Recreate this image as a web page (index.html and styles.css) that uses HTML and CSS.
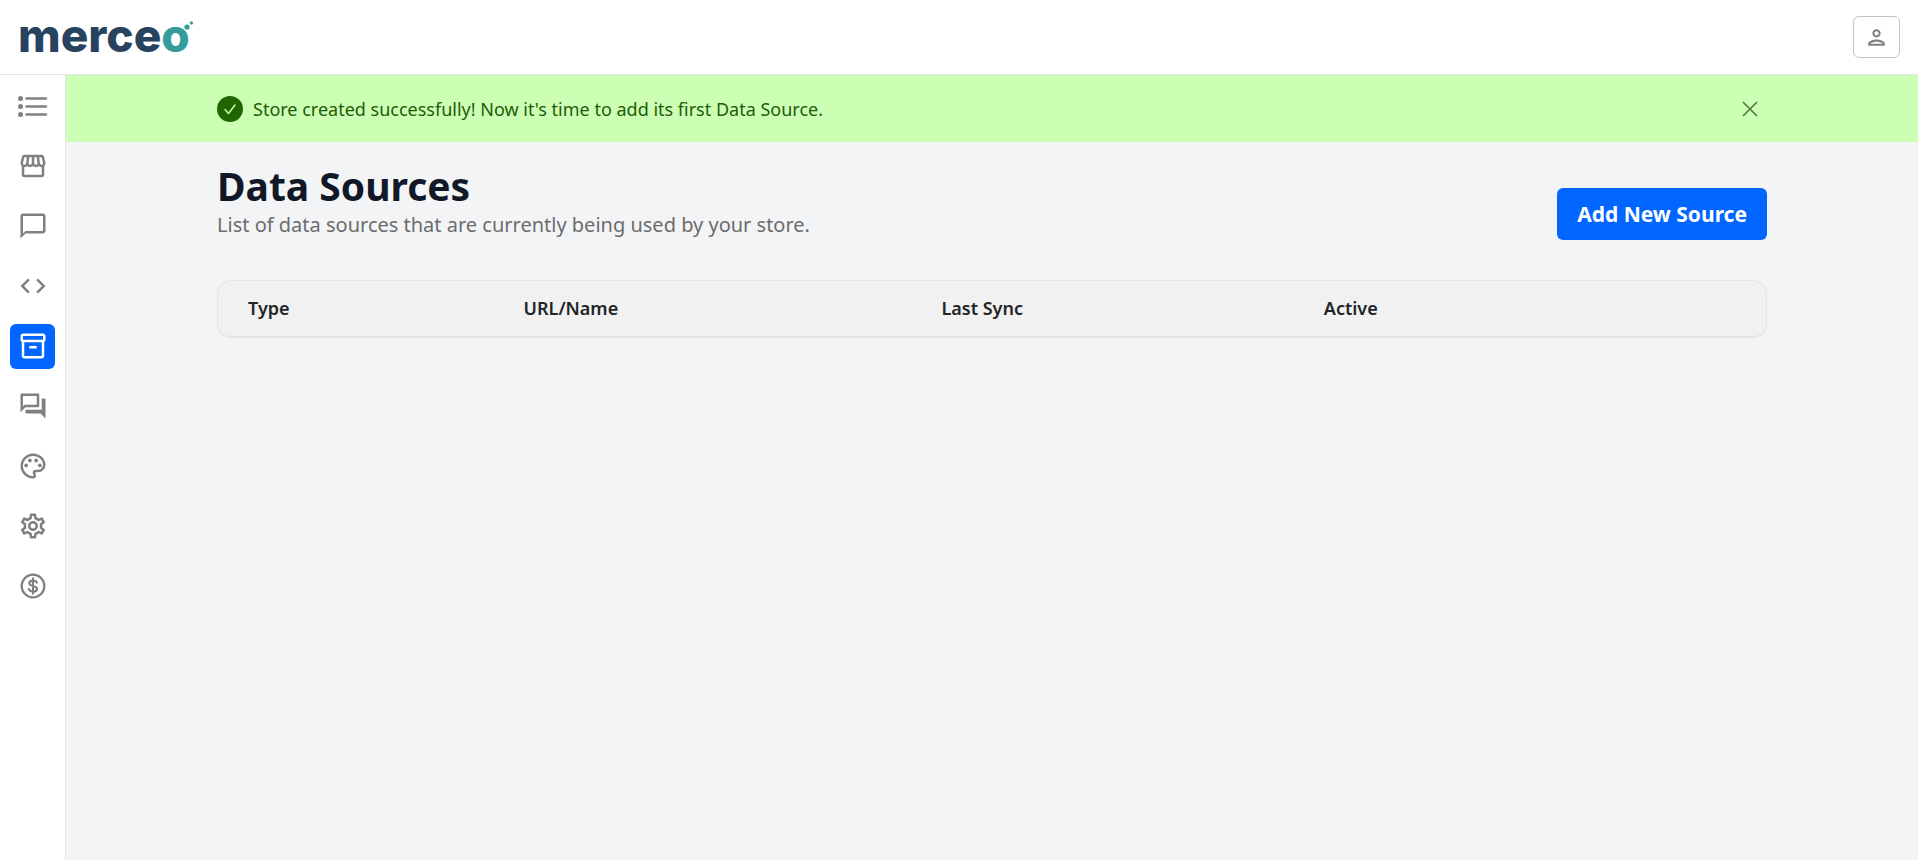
FILE: index.html
```html
<!DOCTYPE html>
<html lang="en">
<head>
<meta charset="utf-8">
<title>Merceo - Data Sources</title>
<link rel="stylesheet" href="styles.css">
</head>
<body>

<header class="topbar">
  <a href="#" class="logo">merce<span>o</span><svg class="logo-dots" viewBox="0 0 10 10"><circle cx="3" cy="6" r="2.6"/><circle cx="7.4" cy="2" r="1.7"/></svg></a>
  <button type="button" class="user-btn" aria-label="Account">
    <svg viewBox="0 0 24 24"><path d="M12 6c1.1 0 2 .9 2 2s-.9 2-2 2-2-.9-2-2 .9-2 2-2m0 10c2.7 0 5.8 1.29 6 2H6c.23-.72 3.31-2 6-2m0-12C9.79 4 8 5.79 8 8s1.79 4 4 4 4-1.79 4-4-1.79-4-4-4zm0 10c-2.67 0-8 1.34-8 4v2h16v-2c0-2.66-5.33-4-8-4z"/></svg>
  </button>
</header>

<div class="layout">
  <nav class="sidebar">
    <a href="#" aria-label="Menu">
      <svg viewBox="0 0 30 30"><circle cx="2.5" cy="7.5" r="2.5"/><circle cx="2.5" cy="15.5" r="2.5"/><circle cx="2.5" cy="23.5" r="2.5"/><path d="M8.500 7.500h19.500M8.500 15.500h19.500M8.500 23.500h19.500" stroke="currentColor" stroke-width="2.4" stroke-linecap="round"/></svg>
    </a>
    <a href="#" aria-label="Stores">
      <svg viewBox="0 0 24 24"><path d="M21.9 8.89l-1.05-4.37c-.22-.9-1-1.52-1.91-1.52H5.05c-.9 0-1.69.63-1.9 1.52L2.1 8.89c-.24 1.02-.02 2.06.62 2.88.08.11.19.19.28.29V19c0 1.1.9 2 2 2h14c1.1 0 2-.9 2-2v-6.94c.09-.09.2-.18.28-.28.64-.82.87-1.87.62-2.89zm-2.99-3.9l1.05 4.37c.1.42.01.84-.25 1.17-.14.18-.44.47-.94.47-.61 0-1.14-.49-1.21-1.14L16.98 5l1.93-.01zM13 5h1.96l.54 4.52c.05.39-.07.78-.33 1.07-.22.26-.54.41-.95.41-.67 0-1.22-.59-1.22-1.31V5zM8.49 9.52L9.04 5H11v4.69c0 .72-.55 1.31-1.29 1.31-.34 0-.65-.15-.89-.41-.25-.29-.37-.68-.33-1.07zm-4.45-.16L5.05 5h1.97l-.58 4.86c-.08.65-.6 1.14-1.21 1.14-.49 0-.8-.29-.93-.47-.27-.32-.36-.75-.26-1.17zM5 19v-6.03c.08.01.15.03.23.03.87 0 1.66-.36 2.24-.95.6.6 1.4.95 2.31.95.87 0 1.65-.36 2.23-.93.59.57 1.39.93 2.29.93.84 0 1.64-.35 2.24-.95.58.59 1.37.95 2.24.95.08 0 .15-.02.23-.03V19H5z"/></svg>
    </a>
    <a href="#" aria-label="Chat">
      <svg viewBox="0 0 24 24"><path d="M20 2H4c-1.1 0-2 .9-2 2v18l4-4h14c1.1 0 2-.9 2-2V4c0-1.1-.9-2-2-2zm0 14H6l-2 2V4h16v12z"/></svg>
    </a>
    <a href="#" aria-label="Embed code">
      <svg viewBox="0 0 24 24"><path d="M9.4 16.6L4.8 12l4.6-4.6L8 6l-6 6 6 6 1.4-1.4zm5.2 0l4.6-4.6-4.6-4.6L16 6l6 6-6 6-1.4-1.4z"/></svg>
    </a>
    <a href="#" class="active" aria-label="Data sources">
      <svg viewBox="0 0 24 24"><path d="M20 2H4c-1 0-2 .9-2 2v3.01c0 .72.43 1.34 1 1.69V20c0 1.1 1.1 2 2 2h14c.9 0 2-.9 2-2V8.700c.57-.35 1-.97 1-1.690V4c0-1.100-1-2-2-2zm-1 18H5V9h14v11zm1-13H4V4h16v3zM9 12h6v2H9z"/></svg>
    </a>
    <a href="#" aria-label="Conversations">
      <svg viewBox="0 0 24 24"><path d="M15 4v7H5.17L4 12.17V4h11m1-2H3c-.55 0-1 .45-1 1v14l4-4h10c.55 0 1-.45 1-1V3c0-.55-.45-1-1-1zm5 4h-2v9H6v2c0 .55.45 1 1 1h11l4 4V7c0-.55-.45-1-1-1z"/></svg>
    </a>
    <a href="#" aria-label="Appearance">
      <svg viewBox="0 0 24 24"><path d="M12 22C6.49 22 2 17.51 2 12S6.49 2 12 2s10 4.04 10 9c0 3.31-2.69 6-6 6h-1.77c-.28 0-.5.22-.5.5 0 .12.05.23.13.33.41.47.64 1.06.64 1.67A2.5 2.5 0 0 1 12 22zm0-18c-4.41 0-8 3.59-8 8s3.59 8 8 8c.28 0 .5-.22.5-.5a.54.54 0 0 0-.14-.35c-.41-.46-.63-1.05-.63-1.65a2.5 2.5 0 0 1 2.5-2.5H16c2.21 0 4-1.79 4-4 0-3.86-3.59-7-8-7z"/><circle cx="6.5" cy="11.5" r="1.5"/><circle cx="9.5" cy="7.5" r="1.5"/><circle cx="14.5" cy="7.5" r="1.5"/><circle cx="17.5" cy="11.5" r="1.5"/></svg>
    </a>
    <a href="#" aria-label="Settings">
      <svg viewBox="0 0 24 24"><path d="M19.43 12.98c.04-.32.07-.64.07-.98 0-.34-.03-.66-.07-.98l2.11-1.65c.19-.15.24-.42.12-.64l-2-3.46c-.09-.16-.26-.25-.44-.25-.06 0-.12.01-.17.03l-2.49 1c-.52-.4-1.08-.73-1.69-.98l-.38-2.65C14.46 2.18 14.25 2 14 2h-4c-.25 0-.46.18-.49.42l-.38 2.65c-.61.25-1.17.59-1.69.98l-2.49-1c-.06-.02-.12-.03-.18-.03-.17 0-.34.09-.43.25l-2 3.46c-.13.22-.07.49.12.64l2.11 1.65c-.04.32-.07.65-.07.98 0 .33.03.66.07.98l-2.11 1.65c-.19.15-.24.42-.12.64l2 3.46c.09.16.26.25.44.25.06 0 .12-.01.17-.03l2.49-1c.52.4 1.08.73 1.69.98l.38 2.65c.03.24.24.42.49.42h4c.25 0 .46-.18.49-.42l.38-2.65c.61-.25 1.17-.59 1.69-.98l2.49 1c.06.02.12.03.18.03.17 0 .34-.09.43-.25l2-3.46c.12-.22.07-.49-.12-.64l-2.11-1.65zm-1.98-1.71c.04.31.05.52.05.73 0 .21-.02.43-.05.73l-.14 1.13.89.7 1.08.84-.7 1.21-1.27-.51-1.04-.42-.9.68c-.43.32-.84.56-1.25.73l-1.06.43-.16 1.13-.2 1.35h-1.4l-.19-1.35-.16-1.13-1.06-.43c-.43-.18-.83-.41-1.23-.71l-.91-.7-1.06.43-1.27.51-.7-1.21 1.08-.84.89-.7-.14-1.13c-.03-.31-.05-.54-.05-.74s.02-.43.05-.73l.14-1.13-.89-.7-1.08-.84.7-1.21 1.27.51 1.04.42.9-.68c.43-.32.84-.56 1.25-.73l1.06-.43.16-1.13.2-1.35h1.39l.19 1.35.16 1.13 1.06.43c.43.18.83.41 1.23.71l.91.7 1.06-.43 1.27-.51.7 1.21-1.07.85-.89.7.14 1.13zM12 8c-2.21 0-4 1.79-4 4s1.79 4 4 4 4-1.79 4-4-1.79-4-4-4zm0 6c-1.1 0-2-.9-2-2s.9-2 2-2 2 .9 2 2-.9 2-2 2z"/></svg>
    </a>
    <a href="#" aria-label="Billing">
      <svg viewBox="0 0 24 24" stroke="currentColor"><circle class="outline" cx="12" cy="12" r="9.1" stroke-width="1.8"/><path class="outline" d="M12 5.8v12.4M15.1 9.4C14.7 8.3 13.5 7.7 12 7.7c-1.7 0-3 .8-3 2.1 0 1.4 1.4 1.8 3 2.2 1.7.4 3.2.9 3.2 2.3 0 1.3-1.3 2.1-3.2 2.1-1.7 0-3-.7-3.4-2" stroke-width="1.7" stroke-linecap="round"/></svg>
    </a>
  </nav>

  <main class="content">
    <div class="alert" role="status">
      <div class="container alert-inner">
        <svg class="alert-icon" viewBox="0 0 26 26"><circle cx="13" cy="13" r="13"/><path d="M8 13.5l3.5 4L18 9" fill="none" stroke="#ccffb3" stroke-width="1.4" stroke-linecap="round" stroke-linejoin="round"/></svg>
        <p>Store created successfully! Now it's time to add its first Data Source.</p>
        <button type="button" class="close-btn" aria-label="Close">
          <svg viewBox="0 0 16 16"><path d="M1 1l14 14M15 1L1 15" stroke="currentColor" stroke-width="1.6"/></svg>
        </button>
      </div>
    </div>

    <div class="container">
      <div class="page-head">
        <div>
          <h1>Data Sources</h1>
          <p>List of data sources that are currently being used by your store.</p>
        </div>
        <button type="button" class="btn-primary">Add New Source</button>
      </div>

      <table class="sources">
        <thead>
          <tr>
            <th class="col-type">Type</th>
            <th class="col-name">URL/Name</th>
            <th class="col-sync">Last Sync</th>
            <th class="col-active">Active</th>
          </tr>
        </thead>
      </table>
    </div>
  </main>
</div>

</body>
</html>
```
FILE: styles.css
```css
* {box-sizing: border-box;}

body {
  margin: 0;
  min-height: 100vh;
  display: flex;
  flex-direction: column;
  font-family: "Noto Sans", sans-serif;
  color: #212529;
  background: #f3f4f6;
}

h1, p {margin: 0;}
svg {display: block; fill: currentColor;}
button {font-family: inherit; cursor: pointer;}

/* top bar */
.topbar {
  display: flex;
  align-items: center;
  justify-content: space-between;
  height: 75px;
  padding: 0 18px;
  background: #fff;
  border-bottom: 1px solid #e2e4e6;
}

.logo {
  display: flex;
  padding-bottom: 4px;
  font-family: Inter, sans-serif;
  font-size: 46px;
  font-weight: 800;
  line-height: 60px;
  color: #28435f;
  text-decoration: none;
}

.logo span {color: #359c9c;}

.logo-dots {
  width: 10px;
  height: 10px;
  margin: 16px 0 0 -6px;
  color: #359c9c;
}

.user-btn {
  display: flex;
  align-items: center;
  justify-content: center;
  width: 47px;
  height: 42px;
  padding: 0;
  color: #808080;
  background: #fff;
  border: 1px solid #c4c4c4;
  border-radius: 6px;
}

.user-btn svg {width: 25px; height: 25px;}

.layout {display: flex; flex: 1;}

/* sidebar */
.sidebar {
  display: flex;
  flex-direction: column;
  gap: 15px;
  padding: 9px 10px;
  background: #fff;
  border-right: 1px solid #e2e4e8;
}

.sidebar a {
  width: 45px;
  height: 45px;
  padding: 7px 8px;
  color: #808080;
  border-radius: 6px;
}

.sidebar svg {width: 30px; height: 30px;}
.sidebar .outline {fill: none;}

.sidebar .active {
  color: #fff;
  background: #0066ff;
}

/* content */
.content {flex: 1;}

.container {
  width: 84%;
  max-width: 1550px;
  margin: 0 auto;
}

.alert {
  color: #1f5c0a;
  background: #ccffb3;
}

.alert-inner {
  display: flex;
  align-items: center;
  gap: 10px;
  height: 67px;
  font-size: 18px;
}

.alert-icon {
  width: 26px;
  height: 26px;
  color: #1f6600;
}

.close-btn {
  margin-left: auto;
  padding: 9px;
  color: #4f7a42;
  background: none;
  border: 0;
}

.close-btn svg {width: 16px; height: 16px;}

.page-head {
  display: flex;
  align-items: flex-end;
  justify-content: space-between;
  padding: 20px 0 40px;
}

.page-head h1 {
  font-size: 39px;
  font-weight: 700;
  line-height: 48px;
  color: #111827;
}

.page-head p {
  font-size: 20px;
  line-height: 30px;
  color: #6c6c6c;
}

.btn-primary {
  height: 52px;
  padding: 0 20px;
  font-size: 21px;
  font-weight: 700;
  color: #fff;
  background: #0066ff;
  border: 0;
  border-radius: 6px;
}

.sources {
  width: 100%;
  table-layout: fixed;
  border: 1px solid #e4e6e8;
  border-bottom-width: 2px;
  border-radius: 14px;
  border-spacing: 0;
  background: #f1f1f1;
}

.sources th {
  padding: 15px 30px;
  font-size: 18px;
  font-weight: 600;
  line-height: 25px;
  text-align: left;
}

.col-type {width: 17.8%;}
.col-name {width: 27%;}
.col-sync {width: 24.7%;}
```
